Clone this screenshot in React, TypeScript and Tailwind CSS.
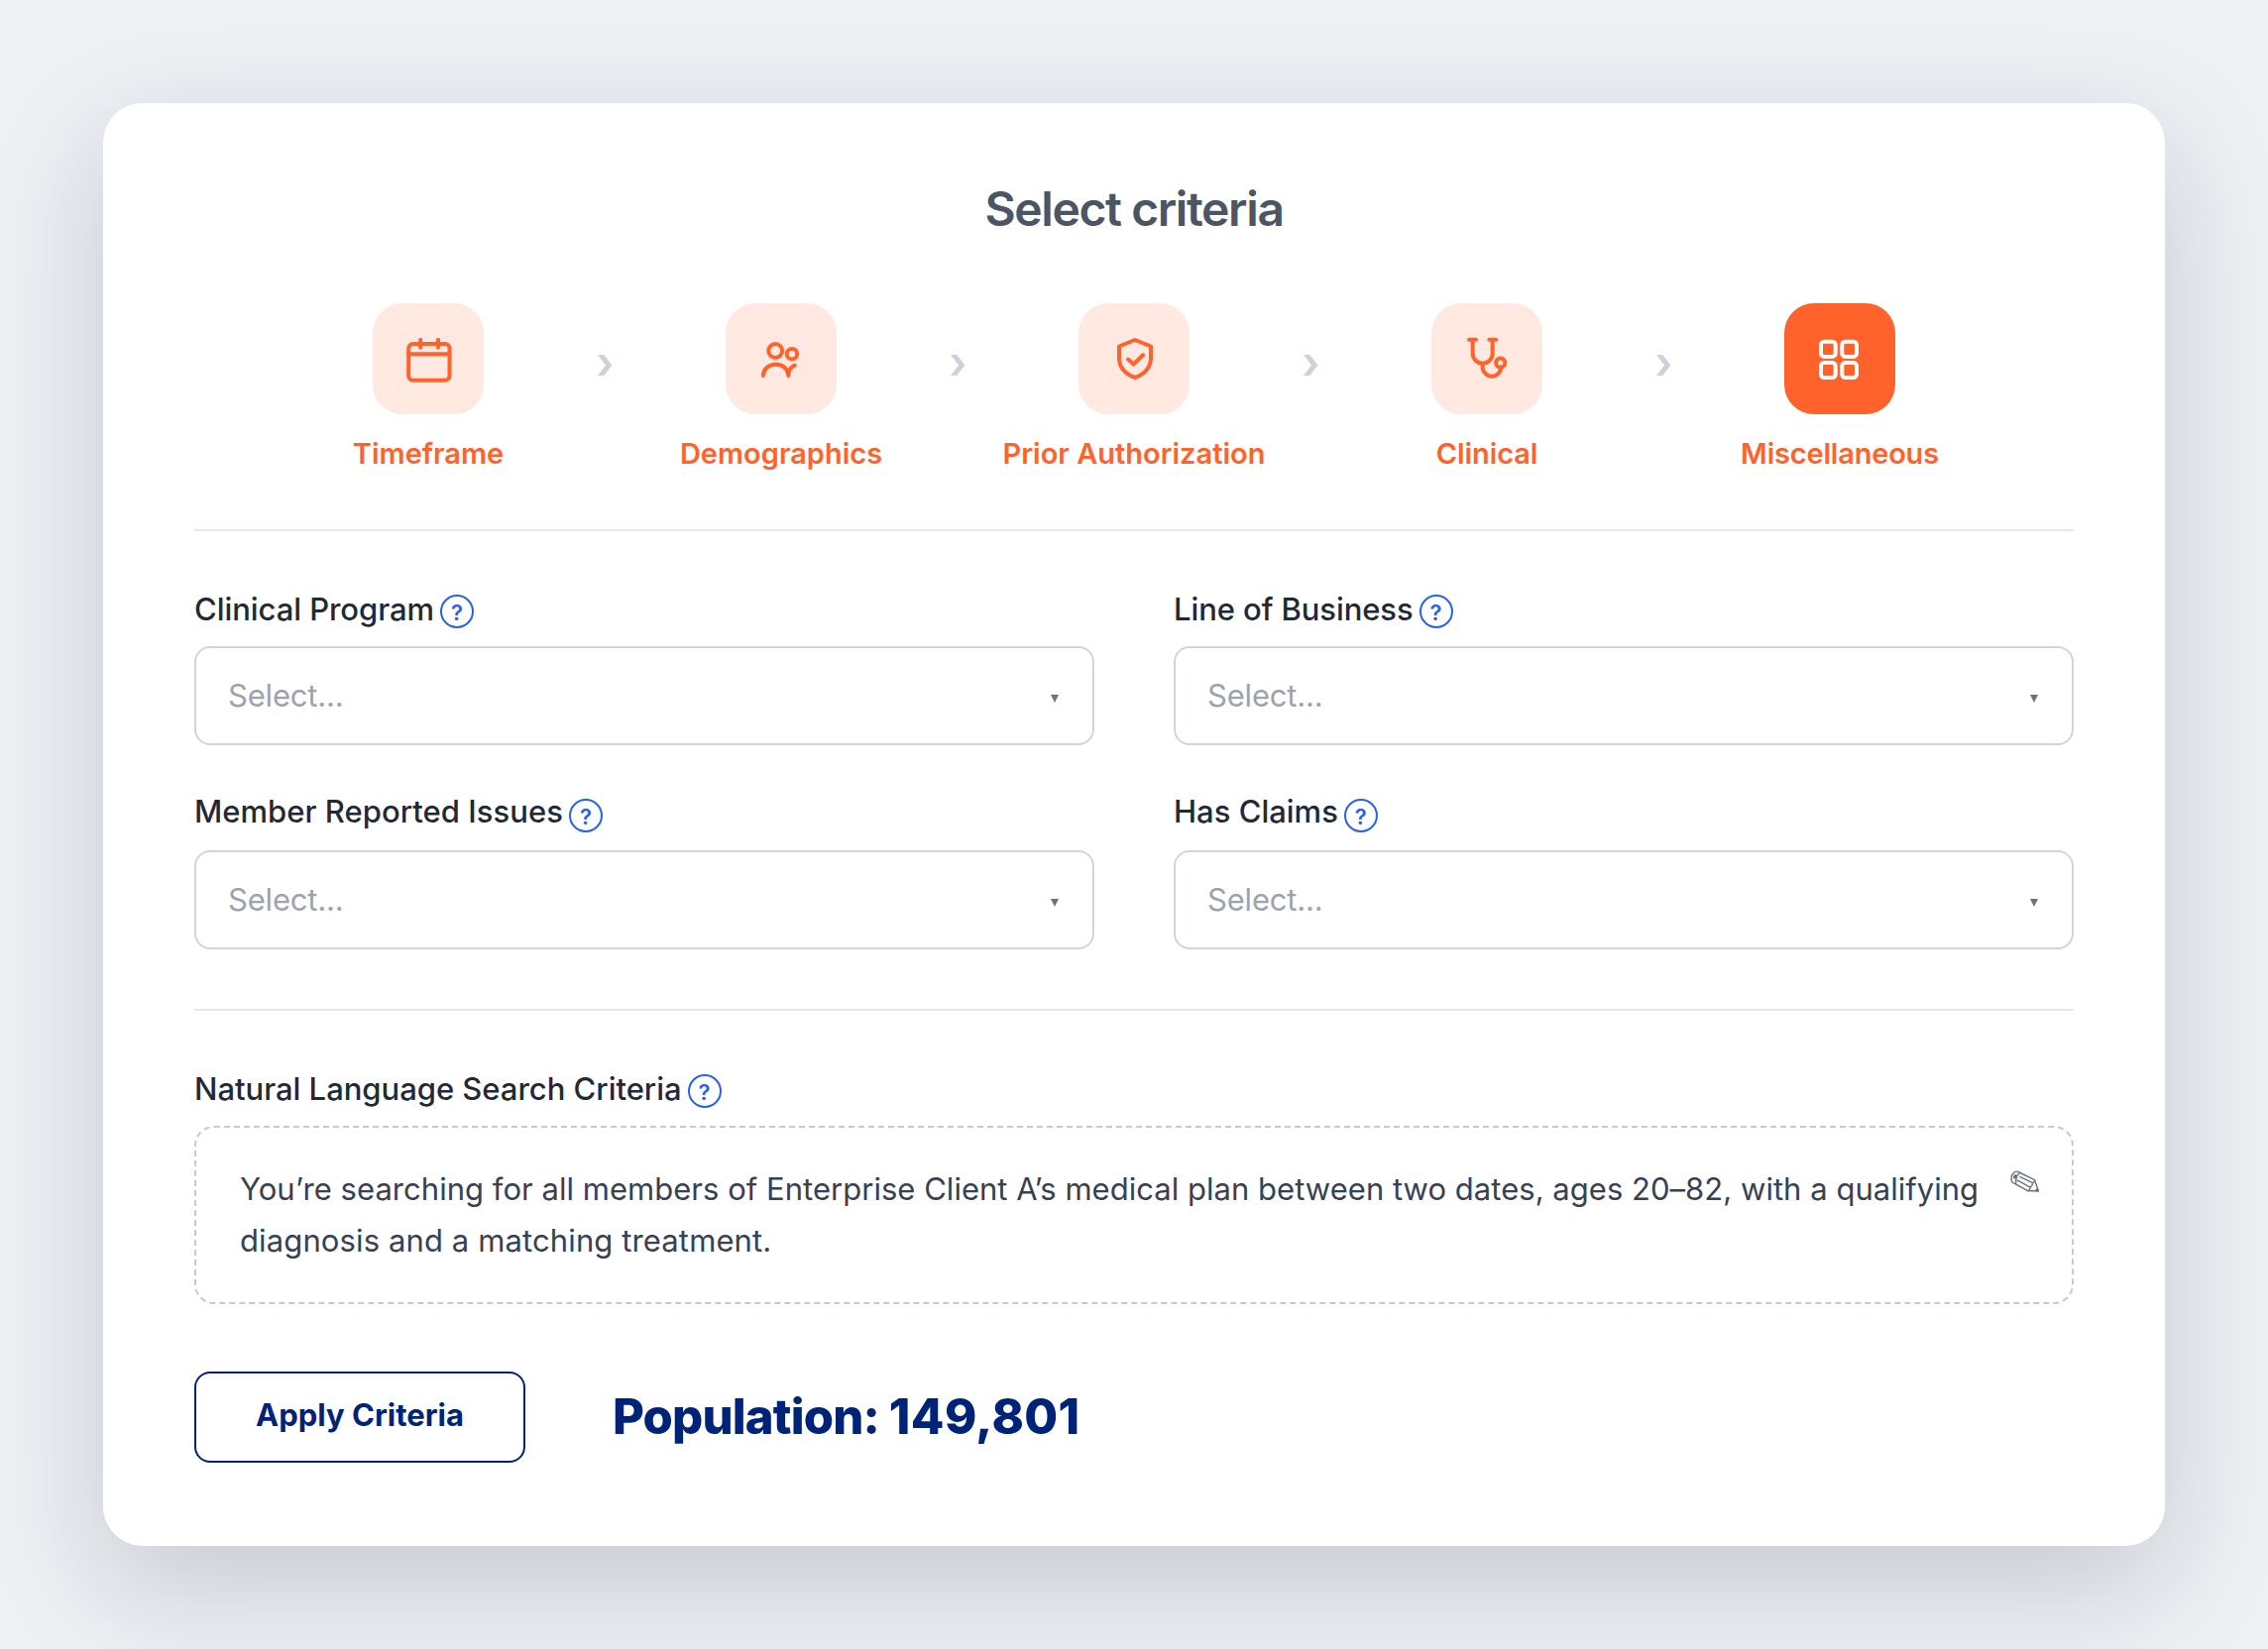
import type { ReactNode } from 'react';

type Step = {
  label: string;
  icon: ReactNode;
  active?: boolean;
  tracking: string;
};

const steps: Step[] = [
  { label: 'Timeframe', icon: <CalendarIcon />, tracking: 'tracking-[0px]' },
  { label: 'Demographics', icon: <PeopleIcon />, tracking: 'tracking-[0px]' },
  { label: 'Prior Authorization', icon: <ShieldIcon />, tracking: 'tracking-[0px]' },
  { label: 'Clinical', icon: <StethoscopeIcon />, tracking: 'tracking-[-0.1px]' },
  { label: 'Miscellaneous', icon: <GridIcon />, active: true, tracking: 'tracking-[-0.2px]' },
];

// labels in the second row sit a little higher than in the first
const fields = [
  { label: 'Clinical Program', className: 'tracking-[-0.06px]' },
  { label: 'Line of Business', className: 'tracking-[-0.09px]' },
  { label: 'Member Reported Issues', className: '-mt-[2px] tracking-[0.03px]' },
  { label: 'Has Claims', className: '-mt-[2px]' },
];

export default function App() {
  return (
    <div className="h-[1664px] w-[2288px] overflow-hidden bg-[#edf1f4] p-[104px] font-['Inter',sans-serif]">
      <div className="h-[1456px] rounded-[40px] bg-white px-[92px] pt-[80px] shadow-[0_40px_120px_rgba(20,20,43,0.18)]">
        <h1 className="text-center text-[48px] leading-[53px] font-semibold tracking-[-1.4px] text-[#4b5563]">Select criteria</h1>

        {/* Steps */}
        <div className="mt-[69px] flex justify-center">
          {steps.map((step, i) => (
            <div key={step.label} className="flex">
              {i > 0 && <Chevron />}
              <StepItem step={step} />
            </div>
          ))}
        </div>

        <hr className="mt-[56px] border-t-2 border-[#e5e7eb]" />

        <div className="mt-[56px] grid grid-cols-2 gap-x-[80px] gap-y-[46px]">
          {fields.map((f) => (
            <div key={f.label}>
              <FieldLabel text={f.label} className={f.className} />
              <button className="mt-[16px] flex h-[100px] w-full items-center justify-between rounded-[16px] border-2 border-[#d1d5db] px-[32px]">
                <span className="text-[31px] tracking-[-0.19px] text-[#9ca3af]">Select...</span>
                <svg width="8" height="8" viewBox="0 0 8 8" className="mt-[6px] mr-[2px]">
                  <path d="M0 0h8L4 8z" fill="#6b7280" />
                </svg>
              </button>
            </div>
          ))}
        </div>

        <hr className="mt-[60px] border-t-2 border-[#e5e7eb]" />

        {/* Search summary */}
        <div className="mt-[56px]">
          <FieldLabel text="Natural Language Search Criteria" className="tracking-[-0.02px]" />
          <div className="mt-[16px] flex h-[180px] justify-between rounded-[20px] border-2 border-dashed border-[#c3cad5] pt-[36px] pr-[32px] pl-[44px]">
            <p className="text-[31px] leading-[52px] whitespace-nowrap text-[#374151]">
              <span className="tracking-[0.03px]">
                You’re searching for all members of Enterprise Client A’s medical plan between two dates, ages 20–82, with a qualifying
              </span>
              <br />
              <span className="tracking-[0.12px]">diagnosis and a matching treatment.</span>
            </p>
            <PencilIcon />
          </div>
        </div>

        <div className="mt-[68px] flex items-center">
          <button className="h-[92px] w-[334px] rounded-[16px] border-2 border-[#00237a] pb-[3px] text-[31px] font-bold text-[#00237a]">
            Apply Criteria
          </button>
          <span className="ml-[88px] text-[49px] leading-[60px] font-extrabold text-[#00237a]">
            <span className="tracking-[-0.85px]">Population: </span>
            <span className="tracking-[0.4px]">149,801</span>
          </span>
        </div>
      </div>
    </div>
  );
}

function StepItem({ step }: { step: Step }) {
  return (
    <div className="flex w-[280px] flex-col items-center">
      <div className={`flex h-[112px] w-[112px] items-center justify-center rounded-[30px] ${step.active ? 'bg-[#ff632b] text-white' : 'bg-[#ffe9e1] text-[#ff632b]'}`}>
        {step.icon}
      </div>
      <span className={`mt-[20px] text-[29px] leading-[40px] font-semibold whitespace-nowrap text-[#ff632b] ${step.tracking}`}>{step.label}</span>
    </div>
  );
}

function Chevron() {
  return (
    <div className="flex h-[112px] w-[76px] items-center justify-center">
      <svg width="14.3" height="21" viewBox="0 0 14.3 21" className="mt-[13px]">
        <path d="M0 0h6.3L14.3 10.5 6.3 21H0l8-10.5z" fill="#cbd2da" />
      </svg>
    </div>
  );
}

function FieldLabel({ text, className }: { text: string; className: string }) {
  return (
    <div className="flex h-[44px] items-start gap-[6px]">
      <span className={`text-[31px] leading-[45px] font-medium text-[#1f2937] ${className}`}>{text}</span>
      <span className="mt-[8px] flex h-[34px] w-[34px] items-center justify-center rounded-full border-2 border-[#2563eb] pt-[2px] text-[22px] leading-none font-semibold text-[#2563eb]">?</span>
    </div>
  );
}

function Icon({ children }: { children: ReactNode }) {
  return (
    <svg width="56" height="56" viewBox="0 0 56 56" fill="none" stroke="currentColor" strokeWidth="4" strokeLinecap="round" strokeLinejoin="round">
      {children}
    </svg>
  );
}

function CalendarIcon() {
  return (
    <Icon>
      <rect x="8.2" y="13" width="41.3" height="36.7" rx="4.5" />
      <path d="M20.2 8.7v8M38 8.7v8M8.2 23.3h41.3" />
    </Icon>
  );
}

function PeopleIcon() {
  return (
    <Icon>
      <circle cx="22.2" cy="20" r="6.9" />
      <circle cx="39" cy="23.2" r="5.2" />
      <path d="M10 45c0-6.5 5-11.3 12.6-11.3s12.7 4.8 12.7 11.3c0-5 2.3-8.5 6.5-10.3" />
    </Icon>
  );
}

function ShieldIcon() {
  return (
    <Icon>
      <path d="M29 9L45 15.5V27c0 9.5-6 16.3-16 20C19 43.3 13 36.5 13 27V15.5z" />
      <path d="M22 28.5l5.500 5l9.700-9.200" />
    </Icon>
  );
}

function StethoscopeIcon() {
  return (
    <Icon>
      <path d="M10 8.7h7M30.3 8.7h7" />
      <path d="M13.7 8.7v14a10 10 0 0 0 20 0v-14" />
      <path d="M23.7 32.7v3.5a9.3 9.5 0 0 0 18.6 0" />
      <circle cx="41.7" cy="32.2" r="4.6" />
    </Icon>
  );
}

function GridIcon() {
  return (
    <Icon>
      <rect x="9" y="10.7" width="14.7" height="15.2" rx="3.3" />
      <rect x="30.3" y="10.7" width="14.7" height="15.2" rx="3.3" />
      <rect x="9" y="32" width="14.7" height="15" rx="3.3" />
      <rect x="30.3" y="32" width="14.7" height="15" rx="3.3" />
    </Icon>
  );
}

function PencilIcon() {
  return (
    <svg width="31" height="23" viewBox="0 0 31 23" fill="none" stroke="#6b7280" strokeWidth="1.4" strokeLinejoin="round" className="mt-[7px]">
      <path d="M3 12C1.5 9.5 2 5 4 3c1.5-1.7 3.5-2.2 5-1.5l16.5 8.2L29.4 20.8H19z" />
      <path d="M10.8 2.5C8 4 6 8.5 6.8 13.5M10.5 6.3l13.1 6.4M7.9 9.9l13.3 7.2M25.5 9.8c-.3 1.7-.9 2.8-1.9 3.4c-.3 1.9-1.1 3.3-2.4 4.2c-.4 1.5-1 2.6-2.2 3.4" />
      <ellipse cx="5.9" cy="6.3" rx="1" ry="1.7" fill="#6b7280" transform="rotate(20 5.9 6.3)" />
      <path d="M27.5 19l1.9 1.8h-2.6z" fill="#6b7280" />
    </svg>
  );
}
